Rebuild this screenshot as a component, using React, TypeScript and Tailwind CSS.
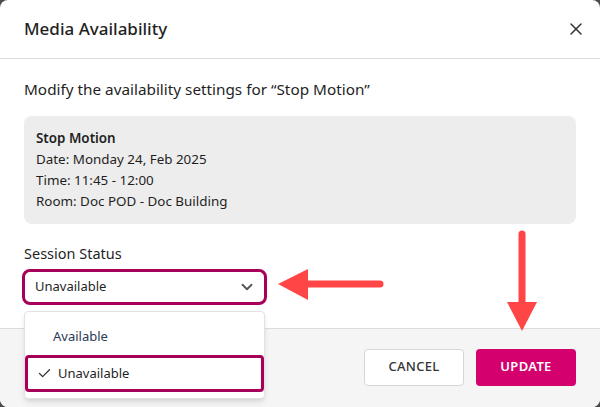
import { X, ChevronDown, Check } from 'lucide-react'

const INFO = ['Date: Monday 24, Feb 2025', 'Time: 11:45 - 12:00', 'Room: Doc POD - Doc Building']

export default function App() {
  return (
    <div className="w-[600px] h-[407px] bg-[#4a4a4a] font-['Noto_Sans',sans-serif] text-[#1f1f1f]">
      <div className="relative w-full h-full bg-white rounded-lg overflow-hidden flex flex-col">
        {/* Header */}
        <div className="h-[59px] shrink-0 flex items-center justify-between pl-6 pr-[14px] border-b border-[#dcdcdc]">
          <h1 className="text-[17px] font-medium">Media Availability</h1>
          <X size={20} strokeWidth={1.8} className="text-[#333]" />
        </div>

        {/* Body */}
        <div className="flex-1 px-6 pt-[19px]">
          <p className="text-[15.3px] leading-[22px]">Modify the availability settings for “Stop Motion”</p>
          <div className="mt-[16px] bg-[#ededed] rounded-lg px-3 py-[12px] text-[13.4px] leading-[21px]">
            <p className="font-semibold">Stop Motion</p>
            {INFO.map((line) => (
              <p key={line}>{line}</p>
            ))}
          </div>
          <p className="mt-[19px] text-[14.5px] leading-[20px]">Session Status</p>
          <div className="mt-[6px] -ml-[2px] w-[245px] h-[36px] border-[3px] border-[#a6005a] rounded-lg flex items-center justify-between pl-[10px] pr-[8px] text-[13px]">
            <span>Unavailable</span>
            <ChevronDown size={18} strokeWidth={2.4} className="text-[#555]" />
          </div>
        </div>

        {/* Footer */}
        <div className="h-[79px] shrink-0 bg-[#f5f5f5] border-t border-[#dcdcdc] flex items-center justify-end gap-3 px-6 pb-[2px]">
          <button className="w-[100px] h-[37px] bg-white border border-[#d6d6d6] rounded text-[13px] font-medium tracking-wide text-[#333]">
            CANCEL
          </button>
          <button className="w-[100px] h-[37px] bg-[#d4006d] rounded text-[13px] font-semibold tracking-wide text-white">
            UPDATE
          </button>
        </div>

        {/* Open dropdown */}
        <div className="absolute left-[24px] top-[311px] w-[241px] bg-white rounded border border-[#e2e2e2] shadow-md py-[6px] text-[13px]">
          <div className="h-[37px] flex items-center pl-[28px] text-[#2a3a55]">Available</div>
          <div className="h-[37px] flex items-center gap-[6px] pl-[9px] border-[3px] border-[#a6005a] rounded">
            <Check size={15} strokeWidth={2} className="text-[#333]" />
            <span>Unavailable</span>
          </div>
        </div>

        {/* Annotation arrows */}
        <svg className="absolute left-0 top-0 pointer-events-none" width="600" height="407">
          <line x1="380" y1="284" x2="300" y2="284" stroke="#ff4545" strokeWidth="7" strokeLinecap="round" />
          <polygon points="278,284 308,269 308,300" fill="#ff4545" />
          <line x1="522" y1="234" x2="522" y2="305" stroke="#ff4545" strokeWidth="7" strokeLinecap="round" />
          <polygon points="522,331 507,302 537,302" fill="#ff4545" />
        </svg>
      </div>
    </div>
  )
}
